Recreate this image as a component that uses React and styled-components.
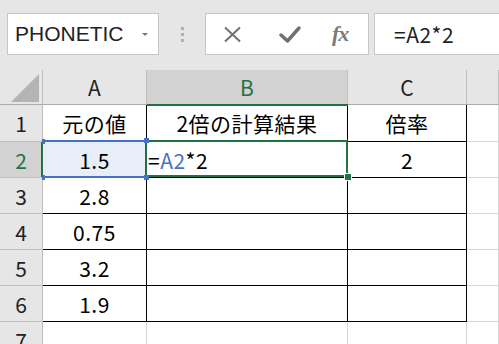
import React from 'react';
import styled, { createGlobalStyle } from 'styled-components';

const GREEN = '#217346';
const BLUE = '#4472c4';
const GRID = '#d4d4d4';
const HEAD_LINE = '#bfbfbf';

const GlobalStyle = createGlobalStyle`
  html, body {
    margin: 0;
    padding: 0;
    background: #e6e6e6;
    overflow: hidden;
  }
  body {
    font-family: "Noto Sans CJK JP", "Noto Sans", sans-serif;
    color: #000;
  }
`;

// Formula bar
const Toolbar = styled.div`
  display: flex;
  align-items: flex-start;
  height: 70px;
  box-sizing: border-box;
  padding: 13px 0 0 7px;
`;

const NameBox = styled.div`
  width: 152px;
  height: 42px;
  box-sizing: border-box;
  background: #fff;
  border: 1px solid #c6c6c6;
  display: flex;
  align-items: center;
  padding: 0 10px 0 7px;
  font-family: "Liberation Sans", Arial, sans-serif;
  font-size: 21px;
  color: #222;
`;

const Caret = styled.span`
  margin-left: auto;
  width: 0;
  height: 0;
  border-left: 3px solid transparent;
  border-right: 3px solid transparent;
  border-top: 3px solid #777;
`;

const Dots = styled.div`
  width: 46px;
  height: 42px;
  display: flex;
  flex-direction: column;
  align-items: center;
  justify-content: center;
  gap: 3px;

  span {
    width: 3px;
    height: 3px;
    background: #b0b0b0;
  }
`;

const FxBox = styled.div`
  width: 164px;
  height: 42px;
  box-sizing: border-box;
  background: #fff;
  border: 1px solid #c6c6c6;
  display: flex;
  align-items: center;
  padding-left: 17px;
`;

const IconSlot = styled.div`
  width: ${(p) => p.$w}px;
  display: flex;
  align-items: center;
  justify-content: flex-start;
`;

const FxText = styled.span`
  font-family: "Liberation Serif", "DejaVu Serif", serif;
  font-style: italic;
  font-weight: bold;
  font-size: 22px;
  color: #7a7a7a;
  letter-spacing: -1px;
`;

const FormulaBox = styled.div`
  flex: 1;
  height: 42px;
  margin-left: 5px;
  margin-right: -8px;
  box-sizing: border-box;
  background: #fff;
  border: 1px solid #c6c6c6;
  display: flex;
  align-items: center;
  padding-left: 19px;
  font-size: 21px;
  letter-spacing: 0.5px;
  color: #222;
`;

// Sheet
const Sheet = styled.div`
  display: grid;
  grid-template-columns: 43px 104px 201px 119px 1fr;
  grid-template-rows: 35px 37px repeat(6, 36px);
  background: #fff;
`;

const Corner = styled.div`
  background: #e6e6e6;
  border-right: 1px solid ${HEAD_LINE};
  border-bottom: 1px solid #ababab;
  display: flex;
  align-items: flex-end;
  justify-content: flex-end;
  padding: 0 3px 2px 0;
`;

const Triangle = styled.div`
  width: 0;
  height: 0;
  border-left: 28px solid transparent;
  border-bottom: 28px solid #b4b4b4;
`;

const ColHead = styled.div`
  position: relative;
  background: ${(p) => (p.$active ? '#d2d2d2' : '#e6e6e6')};
  color: ${(p) => (p.$active ? GREEN : '#222')};
  border-right: 1px solid ${HEAD_LINE};
  border-bottom: 1px solid #ababab;
  display: flex;
  align-items: center;
  justify-content: center;
  font-size: 21px;

  &::after {
    content: '';
    display: ${(p) => (p.$active ? 'block' : 'none')};
    position: absolute;
    left: 0;
    right: -1px;
    bottom: -2px;
    height: 2px;
    background: ${GREEN};
    z-index: 4;
  }
`;

const RowHead = styled.div`
  background: ${(p) => (p.$active ? '#d2d2d2' : '#e6e6e6')};
  color: ${(p) => (p.$active ? GREEN : '#222')};
  border-right: 1px solid ${(p) => (p.$active ? GREEN : HEAD_LINE)};
  box-shadow: ${(p) => (p.$active ? `inset -1px 0 0 ${GREEN}` : 'none')};
  border-bottom: 1px solid ${HEAD_LINE};
  display: flex;
  align-items: center;
  justify-content: center;
  font-size: 21px;
`;

const Cell = styled.div`
  position: relative;
  background: ${(p) => p.$bg || '#fff'};
  border-right: 1px solid ${(p) => p.$line};
  border-bottom: 1px solid ${(p) => p.$line};
  display: flex;
  align-items: center;
  justify-content: ${(p) => (p.$left ? 'flex-start' : 'center')};
  padding-left: ${(p) => (p.$left ? '1px' : '0')};
  font-size: 21px;
  letter-spacing: 0.5px;
  white-space: nowrap;
`;

const Ref = styled.span`
  color: ${BLUE};
`;

const BlueFrame = styled.div`
  position: absolute;
  top: -2px;
  left: -1px;
  right: -1px;
  bottom: -1px;
  border-top: 2px solid ${BLUE};
  border-bottom: 2px solid ${BLUE};
  pointer-events: none;
`;

const Handle = styled.span`
  position: absolute;
  width: ${(p) => p.$w || 5}px;
  height: 5px;
  background: ${(p) => p.$color};
  z-index: 5;
  ${(p) => p.$pos}
`;

const GreenFrame = styled.div`
  position: absolute;
  top: -2px;
  left: -2px;
  right: -1px;
  bottom: 0;
  border: 2px solid ${GREEN};
  z-index: 3;
  pointer-events: none;
`;

const FillHandle = styled.span`
  position: absolute;
  right: -4px;
  bottom: -3px;
  width: 6px;
  height: 6px;
  background: ${GREEN};
  outline: 1px solid #fff;
  z-index: 4;
`;

const rows = [
  ['元の値', '2倍の計算結果', '倍率'],
  ['1.5', 'formula', '2'],
  ['2.8', '', ''],
  ['0.75', '', ''],
  ['3.2', '', ''],
  ['1.9', '', ''],
  ['', '', ''],
];

const CancelIcon = () => (
  <svg width="19" height="17" viewBox="0 0 19 17">
    <path d="M2 1.5 L17 15.5 M17 1.5 L2 15.5" stroke="#707070" strokeWidth="2" fill="none" />
  </svg>
);

const CheckIcon = () => (
  <svg width="22" height="17" viewBox="0 0 22 17">
    <path d="M2 9 L8.5 15 L20 2" stroke="#707070" strokeWidth="3.4" fill="none" strokeLinecap="round" strokeLinejoin="round" />
  </svg>
);

const renderCell = (r, c, value) => {
  const inTable = r < 6;
  const line = inTable ? '#000' : GRID;
  if (r === 1 && c === 0) {
    return (
      <Cell key={c} $line={line} $bg="#e8eef8">
        {value}
        <BlueFrame />
        <Handle $color={BLUE} $w={3} $pos="top: -3px; left: -1px;" />
        <Handle $color={BLUE} $pos="top: -4px; right: -3px;" />
        <Handle $color={BLUE} $w={3} $pos="bottom: -3px; left: -1px;" />
        <Handle $color={BLUE} $pos="bottom: -3px; right: -3px;" />
      </Cell>
    );
  }
  if (r === 1 && c === 1) {
    return (
      <Cell key={c} $line={line} $left>
        =<Ref>A2</Ref>*2
        <GreenFrame />
        <FillHandle />
      </Cell>
    );
  }
  return (
    <Cell key={c} $line={line}>
      {value}
    </Cell>
  );
};

export default function App() {
  return (
    <>
      <GlobalStyle />
      <Toolbar>
        <NameBox>
          PHONETIC
          <Caret />
        </NameBox>
        <Dots>
          <span />
          <span />
          <span />
        </Dots>
        <FxBox>
          <IconSlot $w={56}>
            <CancelIcon />
          </IconSlot>
          <IconSlot $w={53}>
            <CheckIcon />
          </IconSlot>
          <IconSlot $w={30}>
            <FxText>fx</FxText>
          </IconSlot>
        </FxBox>
        <FormulaBox>=A2*2</FormulaBox>
      </Toolbar>
      <Sheet>
        <Corner>
          <Triangle />
        </Corner>
        <ColHead>A</ColHead>
        <ColHead $active>B</ColHead>
        <ColHead>C</ColHead>
        <ColHead />
        {rows.map((row, r) => (
          <React.Fragment key={r}>
            <RowHead $active={r === 1}>{r + 1}</RowHead>
            {row.map((value, c) => renderCell(r, c, value))}
            <Cell $line={GRID} />
          </React.Fragment>
        ))}
      </Sheet>
    </>
  );
}
